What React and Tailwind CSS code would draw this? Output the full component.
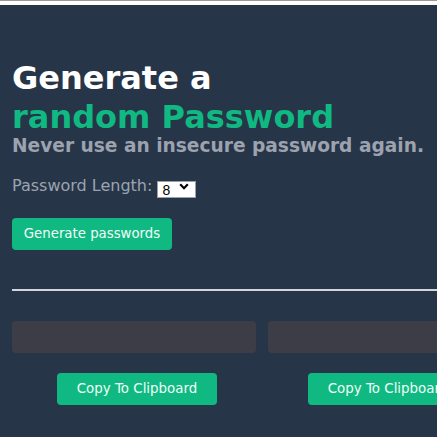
import { useState } from 'react'

const LENGTHS = [8, 10, 12, 15, 20]

export default function App() {
  const [len, setLen] = useState(8)
  const [passwords, setPasswords] = useState(['', ''])

  const generate = () => {
    const chars = 'ABCDEFGHIJKLMNOPQRSTUVWXYZabcdefghijklmnopqrstuvwxyz0123456789!@#$%^&*'
    const make = () => Array.from({ length: len }, () => chars[Math.floor(Math.random() * chars.length)]).join('')
    setPasswords([make(), make()])
  }

  return (
    <div className="w-[437px] h-[437px] overflow-hidden bg-white border-t border-[#9a9a9a]" style={{ fontFamily: '"DejaVu Sans", Verdana, sans-serif' }}>
      <div className="mt-1 h-full bg-[#273549] pl-3 pt-[54px] overflow-hidden">
        <h1 className="text-[32px] font-bold leading-[39px] text-white whitespace-nowrap">
          Generate a<br />
          <span className="text-[#10b981]">random Password</span>
        </h1>
        <h2 className="text-[18.6px] font-bold leading-6 text-[#9ca3af] whitespace-nowrap -mt-[3px]">
          Never use an insecure password again.
        </h2>

        <div className="mt-4 flex items-center text-[16px] text-[#9ca3af]">
          <span>Password Length:</span>
          {/* select sin flecha nativa, chevron dibujado */}
          <div className="relative ml-[5px] w-[39px] h-[17px]">
            <select
              value={len}
              onChange={e => setLen(Number(e.target.value))}
              className="appearance-none w-full h-full bg-white text-black text-[14px] border border-gray-400 leading-none pl-[4px]"
              style={{ fontFamily: '"Liberation Sans", Arial, sans-serif' }}
            >
              {LENGTHS.map(n => <option key={n} value={n}>{n}</option>)}
            </select>
            <svg className="absolute right-[7px] top-[5px] pointer-events-none" width="10" height="7" viewBox="0 0 10 7">
              <path d="M1.2 1.3 L5 5.2 L8.8 1.3" fill="none" stroke="#000" strokeWidth="2.2" />
            </svg>
          </div>
        </div>

        <button
          onClick={generate}
          className="mt-5 h-8 w-[160px] rounded-[4px] bg-[#10b981] text-[13.3px] text-[#f0fdf8]"
        >
          Generate passwords
        </button>

        <hr className="mt-[39px] border-t-2 border-[#e5e7eb] opacity-90" />

        <div className="mt-[30px] flex gap-[12px] w-[700px]">
          {passwords.map((p, i) => (
            <div key={i} className="w-[244px] h-8 rounded-[4px] bg-[#3d3d48] text-white text-sm flex items-center justify-center">{p}</div>
          ))}
        </div>

        <div className="mt-5 ml-[45px] flex gap-[91px] w-[700px]">
          {passwords.map((p, i) => (
            <button key={i} className="h-8 w-[160px] rounded-[4px] bg-[#10b981] text-[13.4px] text-[#f0fdf8]">
              Copy To Clipboard
            </button>
          ))}
        </div>
      </div>
    </div>
  )
}
